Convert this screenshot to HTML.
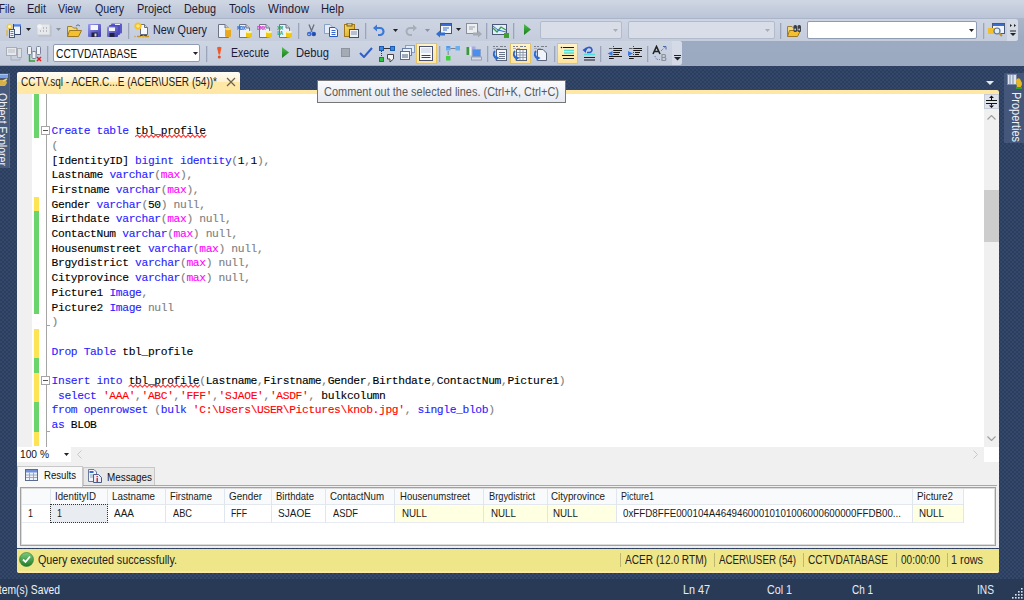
<!DOCTYPE html><html><head><meta charset="utf-8"><style>
html,body{margin:0;padding:0;}
body{width:1024px;height:600px;overflow:hidden;position:relative;background:#2a3b59;font-family:"Liberation Sans",sans-serif;}
</style></head><body>
<div style="position:absolute;left:0;top:65px;width:1024px;height:535px;background-color:#2c3e5e;background-image:radial-gradient(circle at 1px 1px,#34486b 0.7px,transparent 1.1px),radial-gradient(circle at 3px 3px,#34486b 0.7px,transparent 1.1px);background-size:4px 4px;"></div>
<div style="position:absolute;left:0px;top:579px;width:1024px;height:21px;background:#293a57;"></div>
<div style="position:absolute;left:0px;top:0px;width:1024px;height:18px;background:linear-gradient(#d0d7e4,#bac4d6);"></div>
<div style="position:absolute;left:0px;top:18px;width:1024px;height:1px;background:#aab5c9;"></div>
<div class="t " style="position:absolute;left:-1px;top:2px;white-space:pre;font-family:'Liberation Sans', sans-serif;font-size:12px;line-height:14px;color:#1b1b38;transform-origin:0 0;transform:scaleX(0.8271);">File</div>
<div class="t " style="position:absolute;left:27px;top:2px;white-space:pre;font-family:'Liberation Sans', sans-serif;font-size:12px;line-height:14px;color:#1b1b38;transform-origin:0 0;transform:scaleX(0.9184);">Edit</div>
<div class="t " style="position:absolute;left:58px;top:2px;white-space:pre;font-family:'Liberation Sans', sans-serif;font-size:12px;line-height:14px;color:#1b1b38;transform-origin:0 0;transform:scaleX(0.8916);">View</div>
<div class="t " style="position:absolute;left:95px;top:2px;white-space:pre;font-family:'Liberation Sans', sans-serif;font-size:12px;line-height:14px;color:#1b1b38;transform-origin:0 0;transform:scaleX(0.8872);">Query</div>
<div class="t " style="position:absolute;left:137px;top:2px;white-space:pre;font-family:'Liberation Sans', sans-serif;font-size:12px;line-height:14px;color:#1b1b38;transform-origin:0 0;transform:scaleX(0.9101);">Project</div>
<div class="t " style="position:absolute;left:184px;top:2px;white-space:pre;font-family:'Liberation Sans', sans-serif;font-size:12px;line-height:14px;color:#1b1b38;transform-origin:0 0;transform:scaleX(0.9046);">Debug</div>
<div class="t " style="position:absolute;left:229px;top:2px;white-space:pre;font-family:'Liberation Sans', sans-serif;font-size:12px;line-height:14px;color:#1b1b38;transform-origin:0 0;transform:scaleX(0.9281);">Tools</div>
<div class="t " style="position:absolute;left:268px;top:2px;white-space:pre;font-family:'Liberation Sans', sans-serif;font-size:12px;line-height:14px;color:#1b1b38;transform-origin:0 0;transform:scaleX(0.9605);">Window</div>
<div class="t " style="position:absolute;left:321px;top:2px;white-space:pre;font-family:'Liberation Sans', sans-serif;font-size:12px;line-height:14px;color:#1b1b38;transform-origin:0 0;transform:scaleX(0.9316);">Help</div>
<div style="position:absolute;left:0px;top:19px;width:1024px;height:47px;background:linear-gradient(#aab6ca,#9dabc2 40%,#9caac1);"></div>
<div style="position:absolute;left:0px;top:19px;width:1018px;height:22px;background:linear-gradient(#cdd5e3,#c5cddd);border-radius:0 3px 3px 0;"></div>
<div style="position:absolute;left:1007px;top:19px;width:11px;height:22px;background:#d4dbe7;border-radius:0 3px 3px 0;"></div>
<div style="position:absolute;left:0px;top:41px;width:682px;height:24px;background:linear-gradient(#cdd5e3,#c5cddd);border-radius:0 3px 3px 0;"></div>
<div style="position:absolute;left:672px;top:41px;width:10px;height:24px;background:#d4dbe7;border-radius:0 3px 3px 0;"></div>
<svg style="position:absolute;left:6px;top:23px;" width="16" height="15" viewBox="0 0 16 15"><defs><linearGradient id="g1" x1="0" y1="0" x2="0" y2="1"><stop offset="0" stop-color="#7aa6f0"/><stop offset="1" stop-color="#3a6ad8"/></linearGradient></defs><rect x="7.5" y="1.5" width="7" height="10" fill="#f0f4fc" stroke="#34466a"/><rect x="8" y="1" width="7" height="2.5" fill="url(#g1)"/><path d="M0.5 3.5H6.5M3.5 0.5V6.5M1.5 1.5L5.5 5.5M5.5 1.5L1.5 5.5" stroke="#f2c830" stroke-width="1.3"/><circle cx="3.5" cy="3.5" r="1.5" fill="#fff6c0"/><path d="M1 7V13" stroke="#e0b030" stroke-width="1.2"/><rect x="3.5" y="6.5" width="5" height="8" fill="#eef3fb" stroke="#4a5a7a"/><path d="M4.5 8.5H7.5M4.5 10.5H7.5M4.5 12.5H7.5" stroke="#4a80e0"/></svg>
<svg style="position:absolute;left:26px;top:28px;" width="5" height="3" viewBox="0 0 5 3"><path d="M0 0H5L2.5 3Z" fill="#222"/></svg>
<svg style="position:absolute;left:37px;top:24px;" width="15" height="13" viewBox="0 0 15 13"><rect x="1.5" y="1.5" width="13" height="11" fill="#b8bec8"/><rect x="0" y="0" width="13" height="11" fill="#e6e8ec" stroke="#c4c8ce" stroke-width="0.8"/><circle cx="2.5" cy="2.5" r="2.2" fill="#f4f4f4"/><path d="M6 4h1M9 4h1M3 7h1M6 7h1M9 7h1" stroke="#8a8f98" stroke-width="1.2"/></svg>
<svg style="position:absolute;left:56px;top:28px;" width="5" height="3" viewBox="0 0 5 3"><path d="M0 0H5L2.5 3Z" fill="#8d939e"/></svg>
<svg style="position:absolute;left:67px;top:24px;" width="15" height="13" viewBox="0 0 15 13"><path d="M0.5 2.5H5L6.5 4H10V12.5H0.5Z" fill="#f1d878" stroke="#a08030"/><path d="M2.5 6.5H14.5L11.5 12.5H0.5Z" fill="#f5c030" stroke="#a07820"/><path d="M9 2 Q11 -0.5 13 2" stroke="#4a6fb0" fill="none"/></svg>
<svg style="position:absolute;left:88px;top:24px;" width="13" height="13" viewBox="0 0 13 13"><defs><linearGradient id="sv" x1="0" y1="0" x2="1" y2="1"><stop offset="0" stop-color="#9a9af0"/><stop offset="1" stop-color="#3838a8"/></linearGradient></defs><rect x="0" y="0" width="13" height="13" rx="1" fill="url(#sv)"/><rect x="2.5" y="1" width="7.5" height="5" fill="#f4f6fc"/><rect x="3.5" y="8.5" width="6" height="4.5" fill="#22223a"/><rect x="6.5" y="9.5" width="2" height="3" fill="#dde"/></svg>
<svg style="position:absolute;left:107px;top:23px;" width="15" height="14" viewBox="0 0 15 14"><defs><linearGradient id="sa" x1="0" y1="0" x2="1" y2="1"><stop offset="0" stop-color="#9090e8"/><stop offset="1" stop-color="#3838a8"/></linearGradient></defs><rect x="4" y="0.5" width="11" height="10" rx="1" fill="#5a5ac8"/><path d="M8 1.5H13" stroke="#eef" stroke-width="1.2"/><rect x="2" y="2" width="11" height="10" rx="1" fill="#4c4cbc"/><rect x="0" y="3.5" width="11" height="10.5" rx="1" fill="url(#sa)"/><rect x="2" y="4.5" width="6" height="3.5" fill="#f4f6fc"/><rect x="2.5" y="10" width="5" height="4" fill="#22223a"/></svg>
<div style="position:absolute;left:128px;top:23px;width:1px;height:16px;background:#9aa5b9;"></div>
<div style="position:absolute;left:129px;top:23px;width:1px;height:16px;background:#bac4d5;"></div>
<svg style="position:absolute;left:134px;top:22px;" width="16" height="16" viewBox="0 0 16 16"><path d="M6.5 2.5H10.5L13.5 5.5V12.5H6.5Z" fill="#f6f8fc" stroke="#6a7080"/><path d="M10.5 2.5V5.5H13.5" fill="#c8d0dc" stroke="#6a7080"/><circle cx="4" cy="4" r="3.6" fill="#f8c020"/><circle cx="4" cy="4" r="1.8" fill="#ffe880"/><path d="M6 13.5H13" stroke="#2a3450" stroke-width="1.2"/><path d="M0.5 14.5H15.5" stroke="#c89428" stroke-width="1.3" stroke-dasharray="1 1.5 4 1.5"/><circle cx="9.5" cy="14.5" r="1.2" fill="#e8b020"/></svg>
<div class="t " style="position:absolute;left:153px;top:23px;white-space:pre;font-family:'Liberation Sans', sans-serif;font-size:12px;line-height:14px;color:#1b1b38;transform-origin:0 0;transform:scaleX(0.8995);">New Query</div>
<svg style="position:absolute;left:218px;top:24px;" width="15" height="14" viewBox="0 0 15 14"><path d="M0.5 0.5H7L10.5 4V13.5H0.5Z" fill="#eef2fa" stroke="#6c7486"/><path d="M7 0.5V4H10.5" fill="#c8d0dc" stroke="#6c7486"/><path d="M7 5V12.5Q10 14 13 12.5V5Z" fill="#e8a820"/><ellipse cx="10" cy="5" rx="3" ry="1.3" fill="#f8d870"/></svg>
<svg style="position:absolute;left:237px;top:24px;" width="16" height="14" viewBox="0 0 16 14"><path d="M2.5 0.5H9L12.5 4V13.5H2.5Z" fill="#eef2fa" stroke="#6c7486"/><path d="M9 0.5V4H12.5" fill="#c8d0dc" stroke="#6c7486"/><text x="0" y="6" font-size="5.5" font-family="Liberation Mono" font-weight="bold" fill="#2a70d0" letter-spacing="-0.6">MDX</text><text x="0" y="11" font-size="5.5" font-family="Liberation Mono" font-weight="bold" fill="#2a70d0" letter-spacing="-0.6"></text><path d="M9 8V13Q12 14.5 15 13V8Z" fill="#f0c810"/><ellipse cx="12" cy="8" rx="3" ry="1.3" fill="#fff4a0"/></svg>
<svg style="position:absolute;left:257px;top:24px;" width="16" height="14" viewBox="0 0 16 14"><path d="M2.5 0.5H9L12.5 4V13.5H2.5Z" fill="#eef2fa" stroke="#6c7486"/><path d="M9 0.5V4H12.5" fill="#c8d0dc" stroke="#6c7486"/><text x="0" y="6" font-size="5.5" font-family="Liberation Mono" font-weight="bold" fill="#d040c8" letter-spacing="-0.6">DMX</text><text x="0" y="11" font-size="5.5" font-family="Liberation Mono" font-weight="bold" fill="#d040c8" letter-spacing="-0.6"></text><path d="M9 8V13Q12 14.5 15 13V8Z" fill="#f0c810"/><ellipse cx="12" cy="8" rx="3" ry="1.3" fill="#fff4a0"/></svg>
<svg style="position:absolute;left:277px;top:24px;" width="16" height="14" viewBox="0 0 16 14"><path d="M2.5 0.5H9L12.5 4V13.5H2.5Z" fill="#eef2fa" stroke="#6c7486"/><path d="M9 0.5V4H12.5" fill="#c8d0dc" stroke="#6c7486"/><text x="0" y="6" font-size="5.5" font-family="Liberation Mono" font-weight="bold" fill="#30a860" letter-spacing="-0.6">XM</text><text x="0" y="11" font-size="5.5" font-family="Liberation Mono" font-weight="bold" fill="#30a860" letter-spacing="-0.6">LA</text><path d="M9 8V13Q12 14.5 15 13V8Z" fill="#f0c810"/><ellipse cx="12" cy="8" rx="3" ry="1.3" fill="#fff4a0"/></svg>
<div style="position:absolute;left:298px;top:23px;width:1px;height:16px;background:#9aa5b9;"></div>
<div style="position:absolute;left:299px;top:23px;width:1px;height:16px;background:#bac4d5;"></div>
<svg style="position:absolute;left:306px;top:24px;" width="11" height="13" viewBox="0 0 11 13"><path d="M3 0.5L6 8M8 0.5L5 8" stroke="#6a7080" stroke-width="1.3"/><circle cx="3.2" cy="10" r="2.3" fill="#3a68d0"/><circle cx="7.8" cy="10" r="2.3" fill="#2a58c0"/><circle cx="3" cy="10.2" r="0.8" fill="#c8d8f0"/><circle cx="8" cy="10.2" r="0.8" fill="#203a80"/></svg>
<svg style="position:absolute;left:324px;top:24px;" width="15" height="13" viewBox="0 0 15 13"><path d="M0.5 0.5H6L8.5 3V9.5H0.5Z" fill="#e4ecf8" stroke="#8aa0c8"/><path d="M5.5 3.5H11L13.5 6V12.5H5.5Z" fill="#f4f7fd" stroke="#2a58c0"/><path d="M7.5 6.5H11.5M7.5 8.5H11.5M7.5 10.5H11.5" stroke="#3a68d0"/></svg>
<svg style="position:absolute;left:344px;top:23px;" width="16" height="15" viewBox="0 0 16 15"><defs><linearGradient id="ps" x1="0" y1="0" x2="1" y2="1"><stop offset="0" stop-color="#f8e070"/><stop offset="1" stop-color="#d8a010"/></linearGradient></defs><rect x="0.5" y="1.5" width="10" height="12" fill="url(#ps)" stroke="#a07820"/><rect x="3" y="0" width="5" height="3" fill="#d8c890" stroke="#806020"/><rect x="5.5" y="6.5" width="9" height="8" fill="#eef0f4" stroke="#4a5060"/><path d="M7 9H13M7 11H13" stroke="#8090a8"/></svg>
<div style="position:absolute;left:365px;top:23px;width:1px;height:16px;background:#9aa5b9;"></div>
<div style="position:absolute;left:366px;top:23px;width:1px;height:16px;background:#bac4d5;"></div>
<svg style="position:absolute;left:373px;top:24px;" width="12" height="12" viewBox="0 0 12 12"><path d="M2 4H7A3.5 3.5 0 0 1 7 11H5" fill="none" stroke="#3c78d8" stroke-width="2.2"/><path d="M0 4L4 0.5V7.5Z" fill="#3c78d8"/></svg>
<svg style="position:absolute;left:393px;top:29px;" width="5" height="3" viewBox="0 0 5 3"><path d="M0 0H5L2.5 3Z" fill="#222"/></svg>
<svg style="position:absolute;left:405px;top:24px;" width="12" height="12" viewBox="0 0 12 12"><path d="M10 4H5A3.5 3.5 0 0 0 5 11H7" fill="none" stroke="#a8aeb8" stroke-width="2"/><path d="M12 4L8 0.5V7.5Z" fill="#a8aeb8"/></svg>
<svg style="position:absolute;left:425px;top:29px;" width="5" height="3" viewBox="0 0 5 3"><path d="M0 0H5L2.5 3Z" fill="#8d939e"/></svg>
<svg style="position:absolute;left:436px;top:23px;" width="16" height="15" viewBox="0 0 16 15"><rect x="4.5" y="0.5" width="11" height="10" fill="#f0f4fc" stroke="#555"/><rect x="5" y="1" width="10" height="2" fill="#3c6cd0"/><path d="M7 5H13M7 7H11" stroke="#3c6cd0"/><path d="M0 11L4 7.5V9.5H9V12.5H4V14.5Z" fill="#2f6fd6"/></svg>
<svg style="position:absolute;left:456px;top:28px;" width="5" height="3" viewBox="0 0 5 3"><path d="M0 0H5L2.5 3Z" fill="#222"/></svg>
<svg style="position:absolute;left:466px;top:23px;" width="16" height="15" viewBox="0 0 16 15"><rect x="0.5" y="0.5" width="11" height="10" fill="#eceef2" stroke="#8a8f98"/><path d="M3 4H9M3 6H7" stroke="#9aa0aa"/><path d="M16 11L12 7.5V9.5H7V12.5H12V14.5Z" fill="#a4aab4"/></svg>
<div style="position:absolute;left:486px;top:23px;width:1px;height:16px;background:#9aa5b9;"></div>
<div style="position:absolute;left:487px;top:23px;width:1px;height:16px;background:#bac4d5;"></div>
<svg style="position:absolute;left:492px;top:23px;" width="17" height="15" viewBox="0 0 17 15"><rect x="0.5" y="1.5" width="14" height="10" fill="#e6eefc" stroke="#4a5a78"/><path d="M1 5L5 9L9 4L14 7" stroke="#30a040" fill="none" stroke-width="1.3"/><path d="M1 3L6 7L14 9" stroke="#3070d0" fill="none"/><rect x="12" y="10" width="5" height="5" fill="#40a030"/></svg>
<div style="position:absolute;left:513px;top:23px;width:1px;height:16px;background:#9aa5b9;"></div>
<div style="position:absolute;left:514px;top:23px;width:1px;height:16px;background:#bac4d5;"></div>
<svg style="position:absolute;left:524px;top:24px;" width="7" height="11" viewBox="0 0 7 11"><path d="M0 0L7 5.5L0 11Z" fill="url(#pl)"/></svg>
<div style="position:absolute;left:540px;top:21px;width:82px;height:18px;background:#d8dde7;border:1px solid #b2bbcb;border-radius:2px;box-sizing:border-box;"></div>
<svg style="position:absolute;left:613px;top:29px;" width="5" height="3" viewBox="0 0 5 3"><path d="M0 0H5L2.5 3Z" fill="#a8aeb8"/></svg>
<div style="position:absolute;left:628px;top:21px;width:147px;height:18px;background:#d8dde7;border:1px solid #b2bbcb;border-radius:2px;box-sizing:border-box;"></div>
<svg style="position:absolute;left:765px;top:29px;" width="5" height="3" viewBox="0 0 5 3"><path d="M0 0H5L2.5 3Z" fill="#a8aeb8"/></svg>
<div style="position:absolute;left:780px;top:23px;width:1px;height:16px;background:#9aa5b9;"></div>
<div style="position:absolute;left:781px;top:23px;width:1px;height:16px;background:#bac4d5;"></div>
<svg style="position:absolute;left:787px;top:23px;" width="15" height="14" viewBox="0 0 15 14"><path d="M0.5 3.5H5L6.5 5H9V13.5H0.5Z" fill="#f1d878" stroke="#a08030"/><path d="M2.5 7.5H13.5L10.5 13.5H0.5Z" fill="#f5c030" stroke="#a07820"/><rect x="6.5" y="2" width="3.5" height="7" rx="1.5" fill="#3a3f48"/><rect x="10.5" y="2" width="3.5" height="7" rx="1.5" fill="#3a3f48"/><circle cx="8.2" cy="6.5" r="0.9" fill="#c8ccd4"/><circle cx="12.2" cy="6.5" r="0.9" fill="#c8ccd4"/></svg>
<div style="position:absolute;left:807px;top:21px;width:170px;height:18px;background:#fff;border:1px solid #8f9cb3;border-radius:2px;box-sizing:border-box;"></div>
<svg style="position:absolute;left:969px;top:29px;" width="5" height="3" viewBox="0 0 5 3"><path d="M0 0H5L2.5 3Z" fill="#222"/></svg>
<div style="position:absolute;left:983px;top:23px;width:1px;height:16px;background:#9aa5b9;"></div>
<div style="position:absolute;left:984px;top:23px;width:1px;height:16px;background:#bac4d5;"></div>
<svg style="position:absolute;left:988px;top:22px;" width="17" height="16" viewBox="0 0 17 16"><rect x="4.5" y="1.5" width="12" height="10" fill="#f0f4fc" stroke="#4a5a78"/><rect x="5" y="2" width="11" height="2" fill="#3c6cd0"/><path d="M0 6H7V12H0Z" fill="#f0c030"/><circle cx="9" cy="9" r="3" fill="#dfeefa" stroke="#5a7090" stroke-width="1.2"/><path d="M11 11L14 14" stroke="#c89020" stroke-width="2"/></svg>
<svg style="position:absolute;left:1009px;top:23px;" width="8" height="14" viewBox="0 0 8 14"><path d="M1 1L3 2.5L1 4ZM5 1L7 2.5L5 4Z" fill="#222"/><path d="M1 8H7" stroke="#222"/><path d="M1 10H7L4 13Z" fill="#222"/></svg>
<svg style="position:absolute;left:6px;top:47px;" width="16" height="15" viewBox="0 0 16 15"><rect x="0.5" y="0.5" width="10" height="8" fill="#e6e8ec" stroke="#a8adb6"/><path d="M2 3H9M2 5H9" stroke="#b8bcc4"/><rect x="11.5" y="1.5" width="4" height="9" fill="#dcdfe4" stroke="#a8adb6"/><path d="M5 9V13H14V11" stroke="#a8adb6" fill="none"/></svg>
<svg style="position:absolute;left:26px;top:46px;" width="16" height="17" viewBox="0 0 16 17"><rect x="1.5" y="0.5" width="4" height="8" rx="1" fill="#f0f2f6" stroke="#7a8496"/><rect x="10.5" y="0.5" width="4" height="8" rx="1" fill="#f0f2f6" stroke="#7a8496"/><rect x="6" y="5.5" width="4" height="7" rx="1" fill="#f0f2f6" stroke="#7a8496"/><path d="M3.5 9V15H9" stroke="#30a030" stroke-width="1.4" fill="none"/><path d="M11 11L15 15M15 11L11 15" stroke="#e02020" stroke-width="1.5"/></svg>
<div style="position:absolute;left:47px;top:46px;width:1px;height:16px;background:#9aa5b9;"></div>
<div style="position:absolute;left:48px;top:46px;width:1px;height:16px;background:#bac4d5;"></div>
<div style="position:absolute;left:53px;top:44px;width:147px;height:18px;background:#fff;border:1px solid #8f9cb3;border-radius:2px;box-sizing:border-box;"></div>
<div class="t " style="position:absolute;left:56px;top:47px;white-space:pre;font-family:'Liberation Sans', sans-serif;font-size:12px;line-height:14px;color:#111;transform-origin:0 0;transform:scaleX(0.8535);">CCTVDATABASE</div>
<svg style="position:absolute;left:193px;top:52px;" width="5" height="3" viewBox="0 0 5 3"><path d="M0 0H5L2.5 3Z" fill="#222"/></svg>
<div style="position:absolute;left:206px;top:46px;width:1px;height:16px;background:#9aa5b9;"></div>
<div style="position:absolute;left:207px;top:46px;width:1px;height:16px;background:#bac4d5;"></div>
<svg style="position:absolute;left:216px;top:46px;" width="7" height="13" viewBox="0 0 7 13"><path d="M1 1.5Q3.2 0 5.5 1.5L4 8.5H2.6Z" fill="#f05a28"/><circle cx="3.3" cy="11" r="1.5" fill="#e84a20"/></svg>
<div class="t " style="position:absolute;left:231px;top:46px;white-space:pre;font-family:'Liberation Sans', sans-serif;font-size:12px;line-height:14px;color:#1b1b38;transform-origin:0 0;transform:scaleX(0.8764);">Execute</div>
<svg style="position:absolute;left:282px;top:47px;" width="7" height="11" viewBox="0 0 7 11"><defs><linearGradient id="pl" x1="0" y1="0" x2="0" y2="1"><stop offset="0" stop-color="#50c050"/><stop offset="1" stop-color="#1a7a1a"/></linearGradient></defs><path d="M0 0L7 5.5L0 11Z" fill="url(#pl)"/></svg>
<div class="t " style="position:absolute;left:296px;top:46px;white-space:pre;font-family:'Liberation Sans', sans-serif;font-size:12px;line-height:14px;color:#1b1b38;transform-origin:0 0;transform:scaleX(0.9329);">Debug</div>
<div style="position:absolute;left:341px;top:48px;width:9px;height:9px;background:#a5abb5;border:1px solid #8e949e;box-sizing:border-box;"></div>
<svg style="position:absolute;left:359px;top:47px;" width="14" height="11" viewBox="0 0 14 11"><path d="M1 6L5 10L13 1" stroke="#2f5fc8" stroke-width="2" fill="none"/></svg>
<svg style="position:absolute;left:379px;top:46px;" width="16" height="17" viewBox="0 0 16 17"><rect x="0.5" y="0.5" width="4" height="4" fill="#3c8ae0" stroke="#1c5ab0"/><rect x="11.5" y="0.5" width="4" height="4" fill="#3c8ae0" stroke="#1c5ab0"/><path d="M5 2.5H11" stroke="#333"/><rect x="0.5" y="11.5" width="4" height="4" fill="#30c040" stroke="#1a8a20"/><path d="M2.5 5V11" stroke="#333" stroke-dasharray="1 1"/><path d="M8.5 8.5H14.5V13L11 16V13H8.5Z" fill="#f4f6f8" stroke="#444"/></svg>
<svg style="position:absolute;left:400px;top:45px;" width="15" height="16" viewBox="0 0 15 16"><rect x="5.5" y="0.5" width="9" height="7" fill="#e0ecfa" stroke="#8aa0c0"/><rect x="2.5" y="3.5" width="9" height="7" fill="#e8f0fc" stroke="#6a80a0"/><rect x="0.5" y="6.5" width="9" height="8" fill="#f6f8fc" stroke="#5a6a88"/><path d="M2 10H8M2 12H8" stroke="#4a5a78"/></svg>
<div style="position:absolute;left:416px;top:43px;width:21px;height:21px;background:linear-gradient(#fff3c8,#ffe49a);border:1px solid #e5c365;box-sizing:border-box;"></div>
<svg style="position:absolute;left:419px;top:46px;" width="14" height="15" viewBox="0 0 14 15"><rect x="0.5" y="0.5" width="13" height="14" fill="#f8fafc" stroke="#4a5470"/><rect x="2" y="2" width="10" height="5" fill="#dde3ee"/><path d="M2.5 9.5H11.5M2.5 11.5H11.5" stroke="#3a4460"/></svg>
<div style="position:absolute;left:439px;top:46px;width:1px;height:16px;background:#9aa5b9;"></div>
<div style="position:absolute;left:440px;top:46px;width:1px;height:16px;background:#bac4d5;"></div>
<svg style="position:absolute;left:446px;top:46px;" width="16" height="17" viewBox="0 0 16 17"><rect x="0" y="0" width="4.5" height="4.5" fill="#6ab0f0"/><rect x="9.5" y="0" width="4.5" height="4.5" fill="#6ab0f0"/><rect x="0.8" y="0.5" width="3" height="1" fill="#3a80d8"/><path d="M4.5 2.5H9.5" stroke="#7a8090"/><path d="M2.2 5V9" stroke="#8a909a" stroke-width="1.2"/><rect x="0" y="10" width="4.5" height="4.5" fill="#40d040"/></svg>
<svg style="position:absolute;left:466px;top:45px;" width="16" height="16" viewBox="0 0 16 16"><rect x="0.5" y="2" width="3" height="8" fill="#3a9a3a"/><rect x="3.5" y="1.5" width="6" height="9" fill="#a8a8e8"/><rect x="3.5" y="1.5" width="2" height="9" fill="#f0f0f8"/><rect x="6.5" y="4.5" width="8" height="7" fill="#4a8ef0" stroke="#8aa0c0" stroke-width="0.8"/><rect x="5.5" y="12" width="10" height="3" fill="#d8dce4" stroke="#8a94a8" stroke-width="0.8"/></svg>
<div style="position:absolute;left:487px;top:46px;width:1px;height:16px;background:#9aa5b9;"></div>
<div style="position:absolute;left:488px;top:46px;width:1px;height:16px;background:#bac4d5;"></div>
<svg style="position:absolute;left:492px;top:45px;" width="16" height="17" viewBox="0 0 16 17"><path d="M1 1.5H3M4 1.5H6M8 1.5H11M12 1.5H14" stroke="#7a7f8a" stroke-width="1"/><path d="M1 3.5H4M5 3.5H8" stroke="#9aa0aa" stroke-width="0.8"/><rect x="4.5" y="4.5" width="10" height="11" fill="#f4f6fa" stroke="#5a6478"/><path d="M7 7.5H13M7 9.5H13M7 11.5H13M7 13.5H13" stroke="#6a7488"/><path d="M3 6A3.5 4 0 0 0 4.5 13" stroke="#2a6ad0" stroke-width="2" fill="none"/><path d="M3.5 10.5L7.5 13L3.5 15.5Z" fill="#2a6ad0"/></svg>
<div style="position:absolute;left:510px;top:43px;width:21px;height:21px;background:linear-gradient(#fff3c8,#ffe49a);border:1px solid #e5c365;box-sizing:border-box;"></div>
<svg style="position:absolute;left:512px;top:45px;" width="16" height="17" viewBox="0 0 16 17"><path d="M1 1.5H3M4 1.5H6M8 1.5H11M12 1.5H14" stroke="#7a7f8a" stroke-width="1"/><path d="M1 3.5H4M5 3.5H8" stroke="#9aa0aa" stroke-width="0.8"/><rect x="4.5" y="4.5" width="10" height="11" fill="#f4f6fa" stroke="#5a6478"/><path d="M5 7.5H14M5 10H14M5 12.5H14M8 5V15M11 5V15" stroke="#8a94a8" stroke-width="0.9"/><path d="M3 6A3.5 4 0 0 0 4.5 13" stroke="#2a6ad0" stroke-width="2" fill="none"/><path d="M3.5 10.5L7.5 13L3.5 15.5Z" fill="#2a6ad0"/></svg>
<svg style="position:absolute;left:533px;top:45px;" width="16" height="17" viewBox="0 0 16 17"><path d="M1 1.5H3M4 1.5H6M8 1.5H11M12 1.5H14" stroke="#7a7f8a" stroke-width="1"/><path d="M1 3.5H4M5 3.5H8" stroke="#9aa0aa" stroke-width="0.8"/><path d="M4.5 4.5H10L13.5 8V15.5H4.5Z" fill="#f0f3f8" stroke="#5a6478"/><path d="M3 6A3.5 4 0 0 0 4.5 13" stroke="#2a6ad0" stroke-width="2" fill="none"/><path d="M3.5 10.5L7.5 13L3.5 15.5Z" fill="#2a6ad0"/></svg>
<div style="position:absolute;left:554px;top:46px;width:1px;height:16px;background:#9aa5b9;"></div>
<div style="position:absolute;left:555px;top:46px;width:1px;height:16px;background:#bac4d5;"></div>
<div style="position:absolute;left:557px;top:43px;width:21px;height:21px;background:linear-gradient(#fff3c8,#ffe49a);border:1px solid #e5c365;box-sizing:border-box;"></div>
<svg style="position:absolute;left:560px;top:45px;" width="15" height="16" viewBox="0 0 15 16"><path d="M3 2.5H14M3 13.5H14M2 10.5H14" stroke="#1a1a1a" stroke-width="1.1"/><circle cx="1.5" cy="2.5" r="0.8" fill="#1a1a1a"/><path d="M4 5.5H14M4 8H14" stroke="#50e0d8" stroke-width="1.3"/></svg>
<svg style="position:absolute;left:581px;top:45px;" width="15" height="17" viewBox="0 0 15 17"><path d="M5 5.5A3 2.6 0 1 1 9 7.5H6" stroke="#2a5ad0" stroke-width="1.6" fill="none"/><path d="M1.5 5L5 2.5V8Z" fill="#2a5ad0"/><path d="M3 9.5H14" stroke="#50e0d8" stroke-width="1.4"/><path d="M3 12.5H14M3 15H14" stroke="#1a1a1a" stroke-width="1.1"/></svg>
<div style="position:absolute;left:600px;top:46px;width:1px;height:16px;background:#9aa5b9;"></div>
<div style="position:absolute;left:601px;top:46px;width:1px;height:16px;background:#bac4d5;"></div>
<svg style="position:absolute;left:607px;top:45px;" width="16" height="16" viewBox="0 0 16 16"><path d="M6.5 1V15" stroke="#222" stroke-width="0.8" stroke-dasharray="1 1"/><path d="M7 3.5H15M7 5.5H15M7 7.5H13M7 9.5H12M2 11.5H15M2 13.5H6" stroke="#1a1a1a" stroke-width="1.1"/><path d="M2 3.5H5.5" stroke="#555" stroke-width="0.9"/><path d="M0.5 8.5L5.5 6V11Z" fill="#3a7ae0"/></svg>
<svg style="position:absolute;left:627px;top:45px;" width="16" height="16" viewBox="0 0 16 16"><path d="M6.5 1V15" stroke="#222" stroke-width="0.8" stroke-dasharray="1 1"/><path d="M7 3.5H15M7 5.5H15M8 7.5H13M8 9.5H12M2 11.5H15M2 13.5H6" stroke="#1a1a1a" stroke-width="1.1"/><path d="M2 3.5H5.5" stroke="#555" stroke-width="0.9"/><path d="M6 8.5L1 6V11Z" fill="#3a7ae0"/></svg>
<div style="position:absolute;left:647px;top:46px;width:1px;height:16px;background:#9aa5b9;"></div>
<div style="position:absolute;left:648px;top:46px;width:1px;height:16px;background:#bac4d5;"></div>
<svg style="position:absolute;left:652px;top:45px;" width="17" height="17" viewBox="0 0 17 17"><path d="M1 9L4.5 1.5L8 9M2.5 6.5H6.5" stroke="#222" stroke-width="1.6" fill="none"/><path d="M10 9.5H12.5A1.6 1.6 0 0 1 12.5 12.5H10ZM10 12.5H13A1.7 1.7 0 0 1 13 15.5H10Z" stroke="#8a909c" stroke-width="1.2" fill="none"/><path d="M9 6L13 2" stroke="#4a6ab0" stroke-dasharray="1 1"/><path d="M11 1.5H14V4.5" stroke="#4a6ab0" fill="none"/><path d="M3 11Q3.5 15 8 14.5" stroke="#4a6ab0" stroke-dasharray="1 1" fill="none"/></svg>
<svg style="position:absolute;left:674px;top:55px;" width="7" height="6" viewBox="0 0 7 6"><path d="M0 0.5H7" stroke="#222"/><path d="M0 2H7L3.5 5.5Z" fill="#222"/></svg>
<div style="position:absolute;left:0px;top:73px;width:10px;height:95px;background:#485a7c;border-right:1px solid #56688a;box-sizing:border-box;"></div>
<svg style="position:absolute;left:0px;top:73px;" width="10" height="16" viewBox="0 0 10 16"><rect x="0" y="1" width="8" height="4" fill="#7aa0e8"/><rect x="0" y="1" width="8" height="1" fill="#a8c4f4"/><path d="M0 7H6L7 10L5 13H0Z" fill="#d8b048"/><path d="M3 8L7 6" stroke="#f0d070" stroke-width="1.5"/></svg>
<div class="t" style="position:absolute;left:6.5px;top:93px;transform:rotate(90deg) scaleX(0.8827);transform-origin:0 0;white-space:pre;font-family:'Liberation Sans',sans-serif;font-size:12px;line-height:11px;color:#f0f2f8;">Object Explorer</div>
<div style="position:absolute;left:1004px;top:73px;width:20px;height:70px;background:#44577a;"></div>
<svg style="position:absolute;left:1007px;top:74px;" width="16" height="15" viewBox="0 0 16 15"><rect x="0.5" y="0.5" width="9" height="10" fill="#dfe6f2" stroke="#7a8aa8"/><path d="M3 1V10M6 1V10" stroke="#7a8aa8"/><path d="M9 6Q11 3 13 5L15 9Q15 13 12 14H10Z" fill="#e8b820"/><rect x="9" y="13" width="6" height="2" fill="#30a030"/></svg>
<div class="t" style="position:absolute;left:1021px;top:92px;transform:rotate(90deg) scaleX(0.9140);transform-origin:0 0;white-space:pre;font-family:'Liberation Sans',sans-serif;font-size:12px;line-height:11px;color:#f0f2f8;">Properties</div>
<svg style="position:absolute;left:986px;top:81px;" width="8" height="4" viewBox="0 0 8 4"><path d="M0 0H8L4 4Z" fill="#e4e8f0"/></svg>
<div style="position:absolute;left:17px;top:72px;width:223px;height:19px;background:linear-gradient(#fffdf6 0%,#fff2d2 52%,#ffe8a6 54%,#ffe8a6 100%);border-radius:2px 2px 0 0;"></div>
<div style="position:absolute;left:17px;top:90px;width:982px;height:4px;background:#ffe8a6;border-radius:0 2px 0 0;"></div>
<div class="t " style="position:absolute;left:21px;top:75px;white-space:pre;font-family:'Liberation Sans', sans-serif;font-size:12px;line-height:14px;color:#1e1e1e;transform-origin:0 0;transform:scaleX(0.8366);">CCTV.sql - ACER.C...E (ACER\USER (54))*</div>
<svg style="position:absolute;left:226px;top:77px;" width="10" height="10" viewBox="0 0 10 10"><path d="M1 1L9 9M9 1L1 9" stroke="#6a6250" stroke-width="1.2"/></svg>
<div style="position:absolute;left:17px;top:94px;width:967px;height:353px;background:#fff;"></div>
<div style="position:absolute;left:17px;top:94px;width:15px;height:353px;background:#f0f0f0;"></div>
<div style="position:absolute;left:34px;top:94px;width:5px;height:44px;background:#6cd46c;"></div>
<div style="position:absolute;left:34px;top:197px;width:5px;height:14px;background:#fde454;"></div>
<div style="position:absolute;left:34px;top:211px;width:5px;height:103px;background:#6cd46c;"></div>
<div style="position:absolute;left:34px;top:329px;width:5px;height:29px;background:#fde454;"></div>
<div style="position:absolute;left:34px;top:358px;width:5px;height:15px;background:#6cd46c;"></div>
<div style="position:absolute;left:34px;top:373px;width:5px;height:29px;background:#fde454;"></div>
<div style="position:absolute;left:34px;top:402px;width:5px;height:30px;background:#6cd46c;"></div>
<div style="position:absolute;left:34px;top:432px;width:5px;height:14px;background:#fde454;"></div>
<div style="position:absolute;left:46px;top:94px;width:1px;height:353px;background:#a5a5a5;"></div>
<div style="position:absolute;left:46px;top:325px;width:4px;height:1px;background:#a5a5a5;"></div>
<div style="position:absolute;left:46px;top:431px;width:4px;height:1px;background:#a5a5a5;"></div>
<div style="position:absolute;left:41px;top:126px;width:9px;height:9px;box-sizing:border-box;border:1px solid #a5a5a5;background:#fff;"></div>
<div style="position:absolute;left:43px;top:130px;width:5px;height:1px;background:#555;"></div>
<div style="position:absolute;left:41px;top:376px;width:9px;height:9px;box-sizing:border-box;border:1px solid #a5a5a5;background:#fff;"></div>
<div style="position:absolute;left:43px;top:380px;width:5px;height:1px;background:#555;"></div>
<style>.code{position:absolute;left:51.6px;white-space:pre;font-family:"Liberation Mono",monospace;font-size:11.3px;line-height:14.7px;letter-spacing:-0.36px;-webkit-text-stroke:0.1px;color:#000;}.sq{}</style>
<div class="code" style="top:124.10px"><span style="color:#2a1cff">Create</span> <span style="color:#2a1cff">table</span> <span class="sq">tbl_profile</span></div>
<div class="code" style="top:138.80px"><span style="color:#808080">(</span></div>
<div class="code" style="top:153.50px">[IdentityID] <span style="color:#2a1cff">bigint</span> <span style="color:#2a1cff">identity</span><span style="color:#808080">(</span>1<span style="color:#808080">,</span>1<span style="color:#808080">)</span><span style="color:#808080">,</span></div>
<div class="code" style="top:168.20px">Lastname <span style="color:#2a1cff">varchar</span><span style="color:#808080">(</span><span style="color:#ff00ff">max</span><span style="color:#808080">)</span><span style="color:#808080">,</span></div>
<div class="code" style="top:182.90px">Firstname <span style="color:#2a1cff">varchar</span><span style="color:#808080">(</span><span style="color:#ff00ff">max</span><span style="color:#808080">)</span><span style="color:#808080">,</span></div>
<div class="code" style="top:197.60px">Gender <span style="color:#2a1cff">varchar</span><span style="color:#808080">(</span>50<span style="color:#808080">)</span> <span style="color:#808080">null</span><span style="color:#808080">,</span></div>
<div class="code" style="top:212.30px">Birthdate <span style="color:#2a1cff">varchar</span><span style="color:#808080">(</span><span style="color:#ff00ff">max</span><span style="color:#808080">)</span> <span style="color:#808080">null</span><span style="color:#808080">,</span></div>
<div class="code" style="top:227.00px">ContactNum <span style="color:#2a1cff">varchar</span><span style="color:#808080">(</span><span style="color:#ff00ff">max</span><span style="color:#808080">)</span> <span style="color:#808080">null</span><span style="color:#808080">,</span></div>
<div class="code" style="top:241.70px">Housenumstreet <span style="color:#2a1cff">varchar</span><span style="color:#808080">(</span><span style="color:#ff00ff">max</span><span style="color:#808080">)</span> <span style="color:#808080">null</span><span style="color:#808080">,</span></div>
<div class="code" style="top:256.40px">Brgydistrict <span style="color:#2a1cff">varchar</span><span style="color:#808080">(</span><span style="color:#ff00ff">max</span><span style="color:#808080">)</span> <span style="color:#808080">null</span><span style="color:#808080">,</span></div>
<div class="code" style="top:271.10px">Cityprovince <span style="color:#2a1cff">varchar</span><span style="color:#808080">(</span><span style="color:#ff00ff">max</span><span style="color:#808080">)</span> <span style="color:#808080">null</span><span style="color:#808080">,</span></div>
<div class="code" style="top:285.80px">Picture1 <span style="color:#2a1cff">Image</span><span style="color:#808080">,</span></div>
<div class="code" style="top:300.50px">Picture2 <span style="color:#2a1cff">Image</span> <span style="color:#808080">null</span></div>
<div class="code" style="top:315.20px"><span style="color:#808080">)</span></div>
<div class="code" style="top:344.60px"><span style="color:#2a1cff">Drop</span> <span style="color:#2a1cff">Table</span> tbl_profile</div>
<div class="code" style="top:374.00px"><span style="color:#2a1cff">Insert</span> <span style="color:#2a1cff">into</span> <span class="sq">tbl_profile</span><span style="color:#808080">(</span>Lastname<span style="color:#808080">,</span>Firstname<span style="color:#808080">,</span>Gender<span style="color:#808080">,</span>Birthdate<span style="color:#808080">,</span>ContactNum<span style="color:#808080">,</span>Picture1<span style="color:#808080">)</span></div>
<div class="code" style="top:388.70px"> <span style="color:#2a1cff">select</span> <span style="color:#ff0000">'AAA'</span><span style="color:#808080">,</span><span style="color:#ff0000">'ABC'</span><span style="color:#808080">,</span><span style="color:#ff0000">'FFF'</span><span style="color:#808080">,</span><span style="color:#ff0000">'SJAOE'</span><span style="color:#808080">,</span><span style="color:#ff0000">'ASDF'</span><span style="color:#808080">,</span> bulkcolumn</div>
<div class="code" style="top:403.40px"><span style="color:#2a1cff">from</span> <span style="color:#2a1cff">openrowset</span> <span style="color:#808080">(</span><span style="color:#2a1cff">bulk</span> <span style="color:#ff0000">'C:\Users\USER\Pictures\knob.jpg'</span><span style="color:#808080">,</span> <span style="color:#2a1cff">single_blob</span><span style="color:#808080">)</span></div>
<div class="code" style="top:418.10px"><span style="color:#2a1cff">as</span> BLOB</div>
<svg style="position:absolute;left:0px;top:0px;pointer-events:none;" width="1024" height="600" viewBox="0 0 1024 600"><path d="M135.1 136.7 L137.4 134.9 L139.7 137.4 L142.0 134.9 L144.3 137.4 L146.6 134.9 L148.9 137.4 L151.2 134.9 L153.5 137.4 L155.8 134.9 L158.1 137.4 L160.4 134.9 L162.7 137.4 L165.0 134.9 L167.3 137.4 L169.6 134.9 L171.9 137.4 L174.2 134.9 L176.5 137.4 L178.8 134.9 L181.1 137.4 L183.4 134.9 L185.7 137.4 L188.0 134.9 L190.3 137.4 L192.6 134.9 L194.9 137.4 L197.2 134.9 L199.5 137.4 L201.8 134.9 L204.1 137.4 L206.4 134.9" stroke="#ff4040" stroke-width="1.1" fill="none"/></svg>
<svg style="position:absolute;left:0px;top:0px;pointer-events:none;" width="1024" height="600" viewBox="0 0 1024 600"><path d="M128.6 386.6 L130.9 384.8 L133.2 387.3 L135.5 384.8 L137.8 387.3 L140.1 384.8 L142.4 387.3 L144.7 384.8 L147.0 387.3 L149.3 384.8 L151.6 387.3 L153.9 384.8 L156.2 387.3 L158.5 384.8 L160.8 387.3 L163.1 384.8 L165.4 387.3 L167.7 384.8 L170.0 387.3 L172.3 384.8 L174.6 387.3 L176.9 384.8 L179.2 387.3 L181.5 384.8 L183.8 387.3 L186.1 384.8 L188.4 387.3 L190.7 384.8 L193.0 387.3 L195.3 384.8 L197.6 387.3 L199.9 384.8" stroke="#ff4040" stroke-width="1.1" fill="none"/></svg>
<div style="position:absolute;left:984px;top:94px;width:15px;height:15px;background:#dfe3ec;border:1px solid #c5ccd8;box-sizing:border-box;"></div>
<svg style="position:absolute;left:985px;top:95px;" width="13" height="13" viewBox="0 0 13 13"><path d="M1 5.5H12M1 8.5H12" stroke="#111" stroke-width="1"/><path d="M6.5 3V5M6.5 9V10.5" stroke="#111" stroke-width="1"/><path d="M6.5 0.5L9 3H4Z M6.5 13L9 10.5H4Z" fill="#111"/></svg>
<div style="position:absolute;left:984px;top:109px;width:15px;height:338px;background:#f0f0f0;"></div>
<svg style="position:absolute;left:987px;top:115px;" width="9" height="5" viewBox="0 0 9 5"><path d="M0.5 4.5L4.5 0.5L8.5 4.5" stroke="#a0a0a0" fill="none" stroke-width="1.2"/></svg>
<div style="position:absolute;left:984px;top:190px;width:15px;height:52px;background:#cdcdcd;"></div>
<svg style="position:absolute;left:987px;top:436px;" width="9" height="5" viewBox="0 0 9 5"><path d="M0.5 0.5L4.5 4.5L8.5 0.5" stroke="#a0a0a0" fill="none" stroke-width="1.2"/></svg>
<div style="position:absolute;left:17px;top:447px;width:967px;height:15px;background:#f0f0f0;"></div>
<div style="position:absolute;left:17px;top:447px;width:54px;height:15px;background:#fff;"></div>
<div class="t " style="position:absolute;left:20px;top:448px;white-space:pre;font-family:'Liberation Sans', sans-serif;font-size:11px;line-height:13px;color:#111;transform-origin:0 0;transform:scaleX(0.9294);">100 %</div>
<svg style="position:absolute;left:64px;top:453px;" width="5" height="3" viewBox="0 0 5 3"><path d="M0 0H5L2.5 3Z" fill="#222"/></svg>
<svg style="position:absolute;left:77px;top:450px;" width="5" height="9" viewBox="0 0 5 9"><path d="M4.5 0.5L0.5 4.5L4.5 8.5" stroke="#c8c8c8" fill="none"/></svg>
<svg style="position:absolute;left:973px;top:450px;" width="5" height="9" viewBox="0 0 5 9"><path d="M0.5 0.5L4.5 4.5L0.5 8.5" stroke="#c8c8c8" fill="none"/></svg>
<div style="position:absolute;left:984px;top:447px;width:15px;height:15px;background:#fff;"></div>
<div style="position:absolute;left:17px;top:462px;width:982px;height:86px;background:#f0f0f0;"></div>
<div style="position:absolute;left:83px;top:467px;width:72px;height:18px;background:#e8e8e8;border:1px solid #c8c8c8;border-bottom:none;box-sizing:border-box;"></div>
<div style="position:absolute;left:17px;top:466px;width:66px;height:21px;background:#f9f9f9;border:1px solid #c8c8c8;border-bottom:none;box-sizing:border-box;"></div>
<svg style="position:absolute;left:25px;top:469px;" width="13" height="12" viewBox="0 0 13 12"><rect x="0.5" y="0.5" width="12" height="11" fill="#eef2fa" stroke="#5a6a90"/><rect x="1" y="1" width="11" height="2.5" fill="#7090d8"/><path d="M1 6H12M1 8.5H12M4.5 3.5V11M8.5 3.5V11" stroke="#8aa0c8" stroke-width="0.9"/></svg>
<div class="t " style="position:absolute;left:44px;top:469px;white-space:pre;font-family:'Liberation Sans', sans-serif;font-size:11px;line-height:13px;color:#111;transform-origin:0 0;transform:scaleX(0.8722);">Results</div>
<svg style="position:absolute;left:88px;top:469px;" width="14" height="14" viewBox="0 0 14 14"><path d="M0.5 0.5H6L8.5 3V12.5H0.5Z" fill="#f0f4fa" stroke="#6a7a98"/><rect x="1.5" y="2" width="4" height="2" fill="#3a6ad0"/><path d="M2 6H7M2 8H7" stroke="#8aa0b8"/><path d="M5.5 5.5H10.5L13.5 8.5V13.5H5.5Z" fill="#e8eef8" stroke="#4a5a88"/><rect x="8.5" y="9" width="1.5" height="4" fill="#d03030"/><rect x="8.5" y="7" width="1.5" height="1.2" fill="#d03030"/></svg>
<div class="t " style="position:absolute;left:107px;top:471px;white-space:pre;font-family:'Liberation Sans', sans-serif;font-size:11px;line-height:13px;color:#111;transform-origin:0 0;transform:scaleX(0.8975);">Messages</div>
<div style="position:absolute;left:83px;top:485px;width:914px;height:1px;background:#a8a8a8;"></div>
<div style="position:absolute;left:20px;top:487px;width:976px;height:59px;background:#fff;border:1px solid #a0a0a0;box-sizing:border-box;"></div>
<div style="position:absolute;left:21px;top:488px;width:974px;height:57px;border:1px solid #dcdcdc;box-sizing:border-box;"></div>
<div style="position:absolute;left:22px;top:489px;width:941px;height:15px;background:#f9fafc;"></div>
<div style="position:absolute;left:22px;top:504px;width:941px;height:1px;background:#e3e8ef;"></div>
<div style="position:absolute;left:22px;top:522px;width:941px;height:1px;background:#e8ecf2;"></div>
<div style="position:absolute;left:50px;top:489px;width:1px;height:34px;background:#e0e6ee;"></div>
<div style="position:absolute;left:107px;top:489px;width:1px;height:34px;background:#e0e6ee;"></div>
<div style="position:absolute;left:165px;top:489px;width:1px;height:34px;background:#e0e6ee;"></div>
<div style="position:absolute;left:224px;top:489px;width:1px;height:34px;background:#e0e6ee;"></div>
<div style="position:absolute;left:271px;top:489px;width:1px;height:34px;background:#e0e6ee;"></div>
<div style="position:absolute;left:325px;top:489px;width:1px;height:34px;background:#e0e6ee;"></div>
<div style="position:absolute;left:394px;top:489px;width:1px;height:34px;background:#e0e6ee;"></div>
<div style="position:absolute;left:483px;top:489px;width:1px;height:34px;background:#e0e6ee;"></div>
<div style="position:absolute;left:547px;top:489px;width:1px;height:34px;background:#e0e6ee;"></div>
<div style="position:absolute;left:616px;top:489px;width:1px;height:34px;background:#e0e6ee;"></div>
<div style="position:absolute;left:912px;top:489px;width:1px;height:34px;background:#e0e6ee;"></div>
<div style="position:absolute;left:963px;top:489px;width:1px;height:34px;background:#e0e6ee;"></div>
<div style="position:absolute;left:395px;top:505px;width:88px;height:17px;background:#ffffe1;"></div>
<div style="position:absolute;left:484px;top:505px;width:63px;height:17px;background:#ffffe1;"></div>
<div style="position:absolute;left:548px;top:505px;width:68px;height:17px;background:#ffffe1;"></div>
<div style="position:absolute;left:913px;top:505px;width:50px;height:17px;background:#ffffe1;"></div>
<div class="t " style="position:absolute;left:55px;top:490px;white-space:pre;font-family:'Liberation Sans', sans-serif;font-size:11px;line-height:13px;color:#1a1a1a;transform-origin:0 0;transform:scaleX(0.8823);">IdentityID</div>
<div class="t " style="position:absolute;left:112px;top:490px;white-space:pre;font-family:'Liberation Sans', sans-serif;font-size:11px;line-height:13px;color:#1a1a1a;transform-origin:0 0;transform:scaleX(0.8900);">Lastname</div>
<div class="t " style="position:absolute;left:170px;top:490px;white-space:pre;font-family:'Liberation Sans', sans-serif;font-size:11px;line-height:13px;color:#1a1a1a;transform-origin:0 0;transform:scaleX(0.8588);">Firstname</div>
<div class="t " style="position:absolute;left:229px;top:490px;white-space:pre;font-family:'Liberation Sans', sans-serif;font-size:11px;line-height:13px;color:#1a1a1a;transform-origin:0 0;transform:scaleX(0.8991);">Gender</div>
<div class="t " style="position:absolute;left:276px;top:490px;white-space:pre;font-family:'Liberation Sans', sans-serif;font-size:11px;line-height:13px;color:#1a1a1a;transform-origin:0 0;transform:scaleX(0.8630);">Birthdate</div>
<div class="t " style="position:absolute;left:330px;top:490px;white-space:pre;font-family:'Liberation Sans', sans-serif;font-size:11px;line-height:13px;color:#1a1a1a;transform-origin:0 0;transform:scaleX(0.8832);">ContactNum</div>
<div class="t " style="position:absolute;left:400px;top:490px;white-space:pre;font-family:'Liberation Sans', sans-serif;font-size:11px;line-height:13px;color:#1a1a1a;transform-origin:0 0;transform:scaleX(0.8672);">Housenumstreet</div>
<div class="t " style="position:absolute;left:489px;top:490px;white-space:pre;font-family:'Liberation Sans', sans-serif;font-size:11px;line-height:13px;color:#1a1a1a;transform-origin:0 0;transform:scaleX(0.8455);">Brgydistrict</div>
<div class="t " style="position:absolute;left:551px;top:490px;white-space:pre;font-family:'Liberation Sans', sans-serif;font-size:11px;line-height:13px;color:#1a1a1a;transform-origin:0 0;transform:scaleX(0.8921);">Cityprovince</div>
<div class="t " style="position:absolute;left:621px;top:490px;white-space:pre;font-family:'Liberation Sans', sans-serif;font-size:11px;line-height:13px;color:#1a1a1a;transform-origin:0 0;transform:scaleX(0.8177);">Picture1</div>
<div class="t " style="position:absolute;left:917px;top:490px;white-space:pre;font-family:'Liberation Sans', sans-serif;font-size:11px;line-height:13px;color:#1a1a1a;transform-origin:0 0;transform:scaleX(0.8920);">Picture2</div>
<div class="t " style="position:absolute;left:28px;top:507px;white-space:pre;font-family:'Liberation Sans', sans-serif;font-size:11px;line-height:13px;color:#1a1a1a;transform-origin:0 0;transform:scaleX(0.8163);">1</div>
<div class="t " style="position:absolute;left:57px;top:507px;white-space:pre;font-family:'Liberation Sans', sans-serif;font-size:11px;line-height:13px;color:#1a1a1a;transform-origin:0 0;transform:scaleX(0.8163);">1</div>
<div class="t " style="position:absolute;left:114px;top:507px;white-space:pre;font-family:'Liberation Sans', sans-serif;font-size:11px;line-height:13px;color:#1a1a1a;transform-origin:0 0;transform:scaleX(0.9084);">AAA</div>
<div class="t " style="position:absolute;left:173px;top:507px;white-space:pre;font-family:'Liberation Sans', sans-serif;font-size:11px;line-height:13px;color:#1a1a1a;transform-origin:0 0;transform:scaleX(0.8398);">ABC</div>
<div class="t " style="position:absolute;left:231px;top:507px;white-space:pre;font-family:'Liberation Sans', sans-serif;font-size:11px;line-height:13px;color:#1a1a1a;transform-origin:0 0;transform:scaleX(0.7932);">FFF</div>
<div class="t " style="position:absolute;left:278px;top:507px;white-space:pre;font-family:'Liberation Sans', sans-serif;font-size:11px;line-height:13px;color:#1a1a1a;transform-origin:0 0;transform:scaleX(0.9147);">SJAOE</div>
<div class="t " style="position:absolute;left:333px;top:507px;white-space:pre;font-family:'Liberation Sans', sans-serif;font-size:11px;line-height:13px;color:#1a1a1a;transform-origin:0 0;transform:scaleX(0.8520);">ASDF</div>
<div class="t " style="position:absolute;left:402px;top:507px;white-space:pre;font-family:'Liberation Sans', sans-serif;font-size:11px;line-height:13px;color:#1a1a1a;transform-origin:0 0;transform:scaleX(0.8889);">NULL</div>
<div class="t " style="position:absolute;left:491px;top:507px;white-space:pre;font-family:'Liberation Sans', sans-serif;font-size:11px;line-height:13px;color:#1a1a1a;transform-origin:0 0;transform:scaleX(0.8889);">NULL</div>
<div class="t " style="position:absolute;left:553px;top:507px;white-space:pre;font-family:'Liberation Sans', sans-serif;font-size:11px;line-height:13px;color:#1a1a1a;transform-origin:0 0;transform:scaleX(0.8889);">NULL</div>
<div class="t " style="position:absolute;left:623px;top:507px;white-space:pre;font-family:'Liberation Sans', sans-serif;font-size:11px;line-height:13px;color:#1a1a1a;transform-origin:0 0;transform:scaleX(0.8878);">0xFFD8FFE000104A46494600010101006000600000FFDB00...</div>
<div class="t " style="position:absolute;left:919px;top:507px;white-space:pre;font-family:'Liberation Sans', sans-serif;font-size:11px;line-height:13px;color:#1a1a1a;transform-origin:0 0;transform:scaleX(0.8889);">NULL</div>
<div style="position:absolute;left:50px;top:504px;width:58px;height:19px;background:#e9edf2;border:1px dotted #333;box-sizing:border-box;"></div>
<div class="t " style="position:absolute;left:57px;top:507px;white-space:pre;font-family:'Liberation Sans', sans-serif;font-size:11px;line-height:13px;color:#1a1a1a;transform-origin:0 0;transform:scaleX(0.8163);">1</div>
<div style="position:absolute;left:17px;top:549px;width:982px;height:24px;background:#efe68a;border-radius:0 0 3px 3px;"></div>
<div style="position:absolute;left:17px;top:571px;width:982px;height:2px;background:#fbe7a8;border-radius:0 0 2px 2px;"></div>
<svg style="position:absolute;left:19px;top:552px;" width="15" height="15" viewBox="0 0 15 15"><defs><linearGradient id="ck" x1="0" y1="0" x2="0" y2="1"><stop offset="0" stop-color="#7ccc7c"/><stop offset="1" stop-color="#1e7a2a"/></linearGradient></defs><circle cx="7.5" cy="7.5" r="7" fill="url(#ck)" stroke="#2a7a34" stroke-width="0.6"/><path d="M4 7.5L6.5 10L11 4.5" stroke="#fff" stroke-width="1.8" fill="none"/></svg>
<div class="t " style="position:absolute;left:38px;top:553px;white-space:pre;font-family:'Liberation Sans', sans-serif;font-size:12px;line-height:14px;color:#222;transform-origin:0 0;transform:scaleX(0.8957);">Query executed successfully.</div>
<div style="position:absolute;left:620px;top:553px;width:1px;height:14px;background:#c0b870;"></div>
<div style="position:absolute;left:714px;top:553px;width:1px;height:14px;background:#c0b870;"></div>
<div style="position:absolute;left:803px;top:553px;width:1px;height:14px;background:#c0b870;"></div>
<div style="position:absolute;left:896px;top:553px;width:1px;height:14px;background:#c0b870;"></div>
<div style="position:absolute;left:947px;top:553px;width:1px;height:14px;background:#c0b870;"></div>
<div class="t " style="position:absolute;left:625px;top:553px;white-space:pre;font-family:'Liberation Sans', sans-serif;font-size:12px;line-height:14px;color:#222;transform-origin:0 0;transform:scaleX(0.8441);">ACER (12.0 RTM)</div>
<div class="t " style="position:absolute;left:719px;top:553px;white-space:pre;font-family:'Liberation Sans', sans-serif;font-size:12px;line-height:14px;color:#222;transform-origin:0 0;transform:scaleX(0.8132);">ACER\USER (54)</div>
<div class="t " style="position:absolute;left:808px;top:553px;white-space:pre;font-family:'Liberation Sans', sans-serif;font-size:12px;line-height:14px;color:#222;transform-origin:0 0;transform:scaleX(0.8429);">CCTVDATABASE</div>
<div class="t " style="position:absolute;left:901px;top:553px;white-space:pre;font-family:'Liberation Sans', sans-serif;font-size:12px;line-height:14px;color:#222;transform-origin:0 0;transform:scaleX(0.8348);">00:00:00</div>
<div class="t " style="position:absolute;left:951px;top:553px;white-space:pre;font-family:'Liberation Sans', sans-serif;font-size:12px;line-height:14px;color:#222;transform-origin:0 0;transform:scaleX(0.9054);">1 rows</div>
<div class="t " style="position:absolute;left:-4px;top:583px;white-space:pre;font-family:'Liberation Sans', sans-serif;font-size:12px;line-height:14px;color:#f0f2f8;transform-origin:0 0;transform:scaleX(0.8567);">Item(s) Saved</div>
<div class="t " style="position:absolute;left:683px;top:583px;white-space:pre;font-family:'Liberation Sans', sans-serif;font-size:12px;line-height:14px;color:#e8ecf4;transform-origin:0 0;transform:scaleX(0.8991);">Ln 47</div>
<div class="t " style="position:absolute;left:767px;top:583px;white-space:pre;font-family:'Liberation Sans', sans-serif;font-size:12px;line-height:14px;color:#e8ecf4;transform-origin:0 0;transform:scaleX(0.8924);">Col 1</div>
<div class="t " style="position:absolute;left:852px;top:583px;white-space:pre;font-family:'Liberation Sans', sans-serif;font-size:12px;line-height:14px;color:#e8ecf4;transform-origin:0 0;transform:scaleX(0.8281);">Ch 1</div>
<div class="t " style="position:absolute;left:977px;top:583px;white-space:pre;font-family:'Liberation Sans', sans-serif;font-size:12px;line-height:14px;color:#e8ecf4;transform-origin:0 0;transform:scaleX(0.8493);">INS</div>
<svg style="position:absolute;left:1011px;top:587px;" width="12" height="12" viewBox="0 0 12 12"><g fill="#dde3ee"><rect x="10" y="1" width="1.6" height="1.6"/><rect x="7" y="4" width="1.6" height="1.6"/><rect x="10" y="4" width="1.6" height="1.6"/><rect x="4" y="7" width="1.6" height="1.6"/><rect x="7" y="7" width="1.6" height="1.6"/><rect x="10" y="7" width="1.6" height="1.6"/><rect x="1" y="10" width="1.6" height="1.6"/><rect x="4" y="10" width="1.6" height="1.6"/><rect x="7" y="10" width="1.6" height="1.6"/><rect x="10" y="10" width="1.6" height="1.6"/></g></svg>
<div style="position:absolute;left:317px;top:80px;width:249px;height:23px;background:linear-gradient(#fafbfd,#e6e9f1);border:1px solid #767676;box-sizing:border-box;"></div>
<div class="t " style="position:absolute;left:324px;top:85px;white-space:pre;font-family:'Liberation Sans', sans-serif;font-size:12px;line-height:14px;color:#575757;transform-origin:0 0;transform:scaleX(0.9128);">Comment out the selected lines. (Ctrl+K, Ctrl+C)</div>
</body></html>
